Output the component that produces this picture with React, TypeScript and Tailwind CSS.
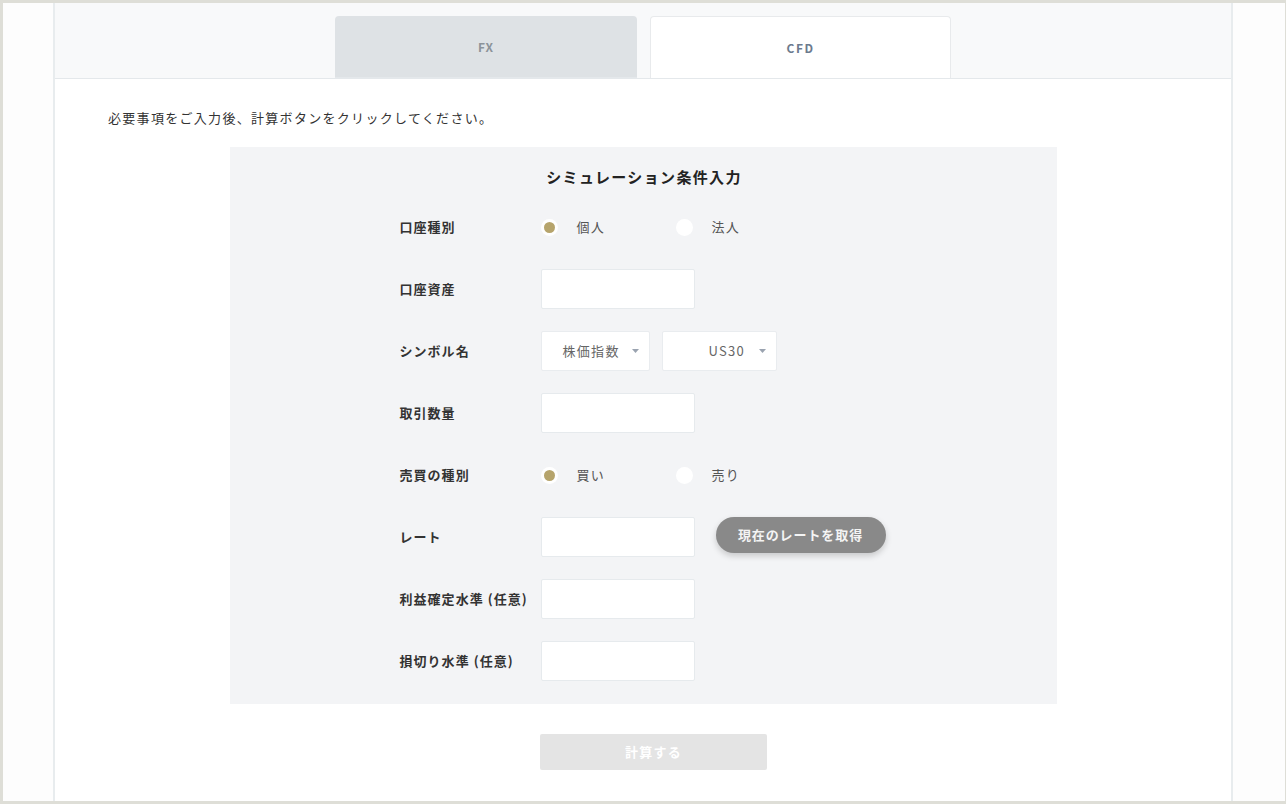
const jp = { fontFamily: '"Noto Sans CJK JP", "Noto Sans", sans-serif' };

function Radio({ checked, label }: { checked?: boolean; label: string }) {
  return (
    <div className="flex w-[135px] items-center">
      <span className="flex h-[17px] w-[17px] items-center justify-center rounded-full bg-white">
        {checked && <span className="h-[11px] w-[11px] rounded-full bg-[#b6a46c]" />}
      </span>
      <span className="ml-[19px] text-[13px] tracking-[0.1em] text-[#555]">{label}</span>
    </div>
  );
}

function TextBox() {
  return <div className="h-[40px] w-[154px] rounded-[2px] border border-[#e6eaed] bg-white" />;
}

function Select({ value, width, pad }: { value: string; width: string; pad: string }) {
  return (
    <div className={`flex h-[40px] ${width} items-center rounded-[2px] border border-[#e9ecef] bg-white ${pad} pr-[10px]`}>
      <span className="flex-1 text-[13px] tracking-[0.1em] text-[#666]">{value}</span>
      <svg width="7" height="4" viewBox="0 0 7 4">
        <path d="M0 0h7L3.5 4z" fill="#9aa3b0" />
      </svg>
    </div>
  );
}

function Row({ label, children }: { label: string; children: React.ReactNode }) {
  return (
    <div className="flex h-[62px] items-center">
      <div className="w-[141px] text-[13px] font-bold tracking-[0.08em] text-[#333]">{label}</div>
      <div className="flex items-center">{children}</div>
    </div>
  );
}

export default function App() {
  return (
    <div className="h-[804px] w-[1286px] bg-[#deded7] pb-[3px] pl-[3px] pr-[1px] pt-[3px]" style={jp}>
      <div className="flex h-full bg-[#fdfdfd] pl-[50px]">
        <div className="flex h-full w-[1180px] flex-col border-x-2 border-[#e8ecee]">
          {/* tabs */}
          <div className="flex h-[75px] items-end justify-center gap-[13px] bg-[#f8f9fa]">
            <div className="flex h-[62px] w-[302px] items-center justify-center rounded-t-[4px] border-b border-[#e4e8eb] bg-[#dee2e5] text-[12px] font-bold tracking-[0.08em] text-[#8c9399]">
              FX
            </div>
            <div className="flex h-[62px] w-[301px] items-center justify-center rounded-t-[4px] border-x border-t border-[#e8eaec] bg-white text-[12px] font-bold tracking-[0.12em] text-[#6c7a8e]">
              CFD
            </div>
          </div>
          <div className="flex flex-1 flex-col border-t border-[#e4e8eb] bg-white">
            <div className="ml-[53px] mt-[30px] h-[18px] text-[13px] leading-[18px] tracking-[0.1em] text-[#333]">
              必要事項をご入力後、計算ボタンをクリックしてください。
            </div>
            <div className="mx-auto mt-[20px] w-[827px] bg-[#f3f4f6] pb-[12px] pl-[170px]">
              <div className="-ml-[170px] pt-[18px] text-center text-[15px] font-bold leading-[24px] tracking-[0.09em] text-[#222]">
                <span className="pl-[2px]">シミュレーション条件入力</span>
              </div>
              <div className="mt-[7px]">
                <Row label="口座種別">
                  <Radio checked label="個人" />
                  <Radio label="法人" />
                </Row>
                <Row label="口座資産">
                  <TextBox />
                </Row>
                <Row label="シンボル名">
                  <div className="flex gap-[12px]">
                    <Select value="株価指数" width="w-[109px]" pad="pl-[21px]" />
                    <Select value="US30" width="w-[115px]" pad="pl-[46px]" />
                  </div>
                </Row>
                <Row label="取引数量">
                  <TextBox />
                </Row>
                <Row label="売買の種別">
                  <Radio checked label="買い" />
                  <Radio label="売り" />
                </Row>
                <Row label="レート">
                  <TextBox />
                  <button className="-mt-[4px] ml-[21px] h-[36px] w-[170px] rounded-full bg-[#898989] text-[13px] font-bold tracking-[0.07em] text-[#f4f4f4] shadow-[0_3px_6px_rgba(0,0,0,0.18)]">
                    現在のレートを取得
                  </button>
                </Row>
                <Row label="利益確定水準 (任意)">
                  <TextBox />
                </Row>
                <Row label="損切り水準 (任意)">
                  <TextBox />
                </Row>
              </div>
            </div>
            <div className="ml-[485px] mt-[30px]">
              <button className="h-[36px] w-[227px] rounded-[2px] bg-[#e4e4e4] text-[13px] font-bold tracking-[0.1em] text-white">
                計算する
              </button>
            </div>
          </div>
        </div>
      </div>
    </div>
  );
}
